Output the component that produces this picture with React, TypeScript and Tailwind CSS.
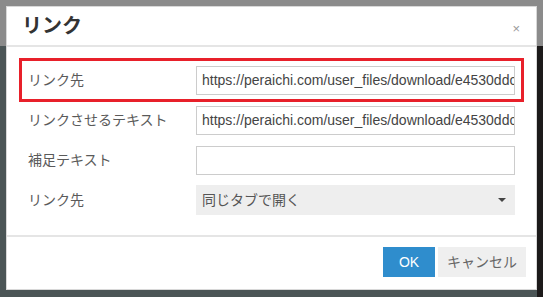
import React from "react";

const url = "https://peraichi.com/user_files/download/e4530ddc";

const Row = ({ label, children, marked }: { label: string; children: React.ReactNode; marked?: boolean }) => (
  <div className="relative flex h-[40px] items-center">
    {marked && <div className="pointer-events-none absolute -inset-x-[9px] -inset-y-[2px] border-[3px] border-[#e8202a]" />}
    <div className="w-[168px] shrink-0 text-[14px] text-[#5a5a5a]">{label}</div>
    {children}
  </div>
);

export default function App() {
  return (
    <div
      className="h-[297px] w-[543px] overflow-hidden bg-[linear-gradient(to_bottom,#8b8b8b_0,#8b8b8b_46px,transparent_46px),linear-gradient(to_right,#4b5556_0,#4b5556_537px,#1c1a1a_537px)] pl-[6px] pt-[6px]"
      style={{ fontFamily: '"Liberation Sans", Arial, "Noto Sans CJK JP", sans-serif' }}
    >
      <div className="flex h-[284px] w-[531px] flex-col border border-[#d8d8d8] bg-white">
        {/* header */}
        <div className="flex h-[40px] items-center justify-between border-b-2 border-[#e5e5e5] pl-[15px] pr-[16px]">
          <h1 className="text-[20px] font-bold text-[#333]">リンク</h1>
          <span className="mt-[4px] text-[13px] leading-none text-[#999]">×</span>
        </div>

        {/* body */}
        <div className="flex flex-col border-b-2 border-[#e5e5e5] px-[21px] pb-[15px] pt-[13px]">
          <Row label="リンク先" marked>
            <div className="flex h-[29px] flex-1 items-center overflow-hidden whitespace-nowrap border border-[#ccc] px-[5px] text-[14px] text-[#444]">
              {url}
            </div>
          </Row>
          <Row label="リンクさせるテキスト">
            <div className="flex h-[29px] flex-1 items-center overflow-hidden whitespace-nowrap border border-[#ccc] px-[5px] text-[14px] text-[#444]">
              {url}
            </div>
          </Row>
          <Row label="補足テキスト">
            <div className="h-[29px] flex-1 border border-[#ccc]" />
          </Row>
          <Row label="リンク先">
            <div className="flex h-[30px] flex-1 items-center justify-between bg-[#eeeeee] pl-[6px] pr-[9px] text-[14px] text-[#555]">
              <span>同じタブで開く</span>
              <span className="h-0 w-0 border-x-[4px] border-t-[4px] border-x-transparent border-t-[#444]" />
            </div>
          </Row>
        </div>

        {/* footer */}
        <div className="flex justify-end gap-[3px] pr-[10px] pt-[10px]">
          <button className="h-[30px] w-[52px] bg-[#2f8dcd] text-[14px] text-white">OK</button>
          <button className="h-[30px] w-[88px] bg-[#efefef] text-[14px] text-[#666]">キャンセル</button>
        </div>
      </div>
    </div>
  );
}
